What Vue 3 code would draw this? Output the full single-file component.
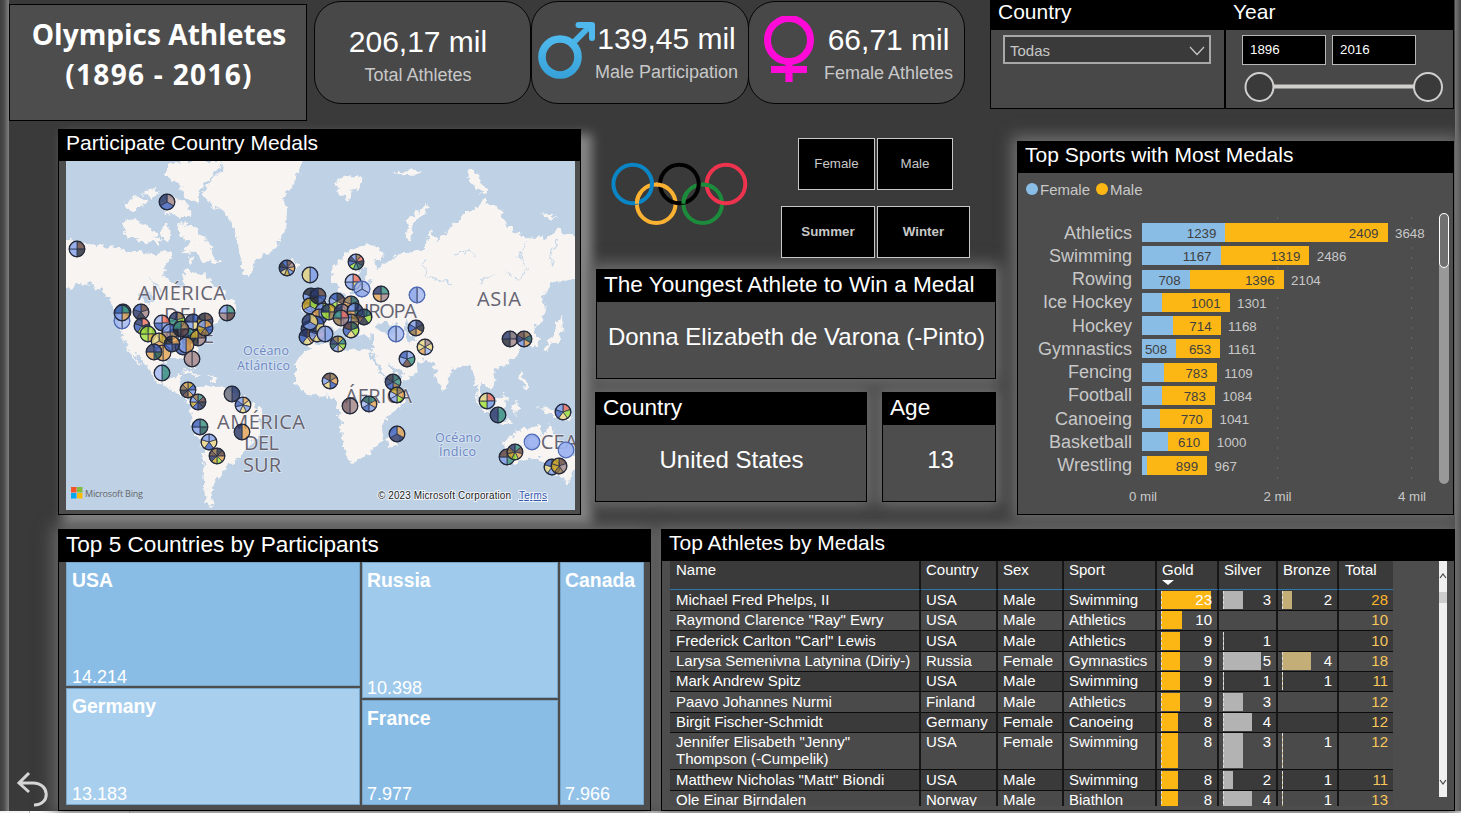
<script setup>
const N = '#1d2b5e', B = '#2f55b8', L = '#7d9be8', P = '#9db4f2', K = '#1b1f2b', W = '#5c3a30', R = '#a08080'
const O = '#e2a04a', Y = '#e8d47a', G = '#2d8a78', D = '#14524f', E = '#9ade2a', T = '#8a6a3a', S = '#f06a55', U = '#c9a21f'

const pins = [
  [167, 202, [R, B, N]], [77, 249, [W, K, L, L]], [123, 312, [G, L, G]], [122, 321, [P, P]], [122, 313, [G, O, L, B]],
  [141, 312, [W, R, K, N, B]], [227, 313, [G, W, R, L]], [162, 323, [S, L, B, P]], [177, 320, [T, E, K, G, N]],
  [193, 322, [B, Y, L, N]], [205, 321, [W, N, R, U, K]], [142, 326, [S, K, E, B, N]], [148, 334, [E, U, E, E]],
  [170, 332, [B, T, R, L]], [188, 336, [G, D, R, B]], [198, 338, [W, R, K, U]], [205, 328, [O, B, T, U, L]],
  [159, 341, [U, O, Y]], [163, 353, [O, O]], [154, 352, [B, D, O, N]], [183, 347, [W, B, L]], [186, 345, [O, L]],
  [172, 344, [O, N, B, K]], [181, 329, [T, W, K, G]], [192, 359, [R, R]], [162, 373, [G, P]],
  [188, 390, [U, B, L, O, W, K, T, O]], [198, 402, [G, W, K, N, B, U, L, T]], [232, 394, [N, '#5d6070']],
  [243, 405, [O, Y, L, Y, P, B, L]], [200, 427, [G, D, L, B]], [209, 442, [L, Y, B, Y, L]], [242, 432, [O, N]],
  [217, 456, [K, W, O, E, U, N, W, T]], [287, 268, [W, R, O, L, U, Y, N, K, B]], [310, 275, [L, Y]],
  [356, 262, [T, S, K, D, G, E, B, N, L]], [353, 282, [S, Y, L, P]], [362, 289, [P, L, P]], [381, 294, [G, R, O, N]],
  [417, 295, [P, L]], [312, 304, [E, N, L, T]], [311, 296, [N, B, U, L, K]], [318, 305, [O, B, Y, L]], [310, 306, [E, L, U]],
  [318, 296, [W, B, K, N]], [337, 301, [K, W, Y, E, L, B]], [351, 304, [D, G, B, O, T]], [323, 311, [E, U, N, L]],
  [319, 317, [L, B, Y, O]], [329, 312, [U, T, E, N]], [342, 312, [R, B, L, N]], [355, 311, [N, G, O, L]],
  [364, 317, [D, E, K, W, N]], [351, 322, [T, O, B, L]], [309, 329, [W, U, O, N, B]], [307, 337, [W, O, Y, B, N]],
  [317, 334, [U, S, Y, L, B]], [316, 324, [B, Y, N, T]], [325, 334, [L, P]], [341, 318, [S, R, T, G]], [310, 322, [Y, L, N]],
  [351, 330, [D, E, Y, B, W]], [338, 344, [U, G, E, Y, L, D, N, T]], [396, 334, [P, P]], [416, 328, [N, K, O, T, B, L]],
  [425, 347, [R, Y, P, O, Y, Y]], [407, 359, [L, G, W, L, B]], [330, 381, [T, O, B, Y, L, W]],
  [393, 382, [D, G, T, B, N, K]], [397, 395, [T, O, E, L, P, U]], [350, 406, [R, '#6d5058']], [369, 404, [G, O, L, B, P, D]],
  [397, 434, [O, N, B]], [510, 339, ['#6d6068', R, K, N]], [524, 339, [T, D, O, L, N, W]], [487, 401, [S, L, E, Y]],
  [498, 415, [G, N]], [563, 412, [S, E, Y, B, L]], [507, 457, [T, G, L, W]], [515, 452, [G, W, O, E, U, T, N]],
  [532, 442, [P]], [566, 450, [P]], [552, 467, [T, U, L, Y, B]], [559, 466, [W, R, T, U, U]]
]
const slices = pins.map(([x, y, colors]) => {
  const n = colors.length
  const r = 7.8
  const pt = (k) => {
    const a = (k / n) * Math.PI * 2 - Math.PI / 2
    return `${(x + r * Math.cos(a)).toFixed(2)} ${(y + r * Math.sin(a)).toFixed(2)}`
  }
  return {
    x, y, r, n, colors,
    paths: n > 1 ? colors.map((c, k) => ({ c, d: `M${x} ${y}L${pt(k)}A${r} ${r} 0 0 1 ${pt(k + 1)}Z` })) : []
  }
})

const sports = [
  ['Athletics', 1239, 2409], ['Swimming', 1167, 1319], ['Rowing', 708, 1396], ['Ice Hockey', 300, 1001],
  ['Hockey', 454, 714], ['Gymnastics', 508, 653], ['Fencing', 326, 783], ['Football', 301, 783],
  ['Canoeing', 271, 770], ['Basketball', 390, 610], ['Wrestling', 68, 899]
]
const barWidth = (v) => ({ width: v * 0.0673 + 'px' })

const athletes = [
  ['Michael Fred Phelps, II', 'USA', 'Male', 'Swimming', 23, 3, 2, 28],
  ['Raymond Clarence "Ray" Ewry', 'USA', 'Male', 'Athletics', 10, 0, 0, 10],
  ['Frederick Carlton "Carl" Lewis', 'USA', 'Male', 'Athletics', 9, 1, 0, 10],
  ['Larysa Semenivna Latynina (Diriy-)', 'Russia', 'Female', 'Gymnastics', 9, 5, 4, 18],
  ['Mark Andrew Spitz', 'USA', 'Male', 'Swimming', 9, 1, 1, 11],
  ['Paavo Johannes Nurmi', 'Finland', 'Male', 'Athletics', 9, 3, 0, 12],
  ['Birgit Fischer-Schmidt', 'Germany', 'Female', 'Canoeing', 8, 4, 0, 12],
  ['Jennifer Elisabeth "Jenny" Thompson (-Cumpelik)', 'USA', 'Female', 'Swimming', 8, 3, 1, 12],
  ['Matthew Nicholas "Matt" Biondi', 'USA', 'Male', 'Swimming', 8, 2, 1, 11],
  ['Ole Einar Bjrndalen', 'Norway', 'Male', 'Biathlon', 8, 4, 1, 13]
]
const goldBar = (v) => ({ width: (v === 23 ? 49 : v * 2 - 0.5) + 'px' })
const smallBar = (v) => ({ width: Math.max(0, (v - 1) * 9.3) + 'px' })
</script>

<template>
  <div class="page">
    <div class="canvas">
      <div class="edge left-edge"></div>
      <div class="report">
        <header class="top">
          <h1 class="title">Olympics Athletes<br /><span>(1896 - 2016)</span></h1>
          <div class="kpis">
            <div class="kpi first"><div class="kpi-text"><b>206,17 mil</b><span>Total Athletes</span></div></div>
            <div class="kpi male">
              <svg width="58" height="60" viewBox="537 19 58 60">
                <defs><linearGradient id="mg" x1="0" y1="0" x2="0" y2="1"><stop offset="0" stop-color="#4fb8ec" /><stop offset="1" stop-color="#38a3da" /></linearGradient></defs>
                <circle cx="560" cy="56" r="18" fill="none" stroke="url(#mg)" stroke-width="7.6" />
                <path d="M574 41L590 25" stroke="#4ab4e8" stroke-width="6" />
                <path d="M578.5 24H592V37" fill="none" stroke="#4fb8ec" stroke-width="6" stroke-linecap="round" stroke-linejoin="round" />
              </svg>
              <div class="kpi-text"><b>139,45 mil</b><span>Male Participation</span></div>
            </div>
            <div class="kpi female">
              <svg width="50" height="66" viewBox="764 15 50 66">
                <circle cx="789" cy="39" r="21.5" fill="none" stroke="#ff0ad6" stroke-width="7" />
                <path d="M789 60V81M771 68.5H807" stroke="#ff0ad6" stroke-width="7.2" />
              </svg>
              <div class="kpi-text"><b>66,71 mil</b><span>Female Athletes</span></div>
            </div>
          </div>
          <div class="slicer country-slicer">
            <h2>Country</h2>
            <div class="dropdown"><span>Todas</span><svg width="16" height="10" viewBox="0 0 16 10"><path d="M1 1L8 8.5L15 1" fill="none" stroke="#c8c8c8" stroke-width="1.2" /></svg></div>
          </div>
          <div class="slicer year-slicer">
            <h2>Year</h2>
            <div class="years"><span>1896</span><span>2016</span></div>
            <svg class="range" width="200" height="32" viewBox="0 0 200 32">
              <path d="M30 15.5H171" stroke="#d0cfce" stroke-width="4" />
              <circle cx="15.5" cy="16" r="14" fill="#3a3a3a" stroke="#d0cfce" stroke-width="2" />
              <circle cx="184" cy="16" r="14" fill="#3a3a3a" stroke="#d0cfce" stroke-width="2" />
            </svg>
          </div>
        </header>

        <section class="middle">
          <div class="panel map-panel">
            <h2>Participate Country Medals</h2>
            <svg class="map" width="509" height="349" viewBox="66 161 509 349">
              <defs>
                <filter id="coast" x="-5%" y="-5%" width="110%" height="110%">
                  <feTurbulence type="fractalNoise" baseFrequency="0.16" numOctaves="3" seed="4" />
                  <feDisplacementMap in="SourceGraphic" scale="10" xChannelSelector="R" yChannelSelector="G" />
                </filter>
              </defs>
              <rect x="66" y="161" width="509" height="349" fill="#bed1e5" />
              <g filter="url(#coast)" fill="#f7f4f2">
                <path d="M60 238L80 243L96 245L108 249L120 246L130 254L143 251L157 256L166 251L172 258L165 266L163 275L172 281L180 289L185 284L183 274L189 268L197 275L205 274L212 282L224 291L232 301L236 310L224 316L214 323L206 334L200 345L196 353L197 366L192 368L188 359L176 358L164 361L161 372L166 380L173 379L177 374L183 376L178 384L184 388L188 397L196 402L192 405L181 396L168 388L154 380L148 368L137 355L133 351L141 367L137 363L127 347L120 332L119 315L111 302L100 289L84 282L72 287L60 290Z" />
                <path d="M203 192L211 180L222 171L224 155H304L300 168L295 183L283 197L287 213L285 230L280 243L267 253L253 263L250 277L243 275L240 263L238 243L232 223L223 210L213 207Z" />
                <path d="M121 222L135 219L147 227L157 235L151 243L139 241L127 236Z" />
                <path d="M124 203L135 197L147 201L141 209L128 210ZM142 192L156 187L160 194L148 198ZM160 201L174 197L190 206L192 217L178 217L166 212Z" />
                <path d="M167 166L181 161H225L211 177L199 190L197 204L184 197L179 184L167 177Z" />
                <path d="M177 224L190 225L205 237L212 250L219 263L205 262L195 252L182 251L192 242L180 237Z" />
                <path d="M160 227L171 225L172 239L163 241ZM153 236L161 240L158 246ZM188 256L195 259L190 264Z" />
                <path d="M191 388L204 385L224 387L235 394L249 401L263 413L257 438L241 455L229 465L218 478L211 492L214 507L206 503L203 482L205 458L199 438L191 417L193 402Z" />
                <path d="M180 370L191 371L203 377L196 377ZM207 377L216 378L212 382ZM283 264L292 260L299 264L292 271L285 270Z" />
                <path d="M307 345L307 332L318 330L313 319L326 309L337 299L345 296L339 286L331 283L332 270L341 258L353 248L369 244L382 252L383 260L374 260L377 268L389 262L397 253L410 253L426 249L431 228L437 240L451 225L464 214L484 199L501 209L503 223L523 237L543 238L557 230L590 241V270L574 278L553 283L542 297L545 309L541 322L532 331L541 341L535 348L526 334L520 338L520 351L509 363L493 370L495 383L491 391L482 382L478 388L485 402L478 397L475 381L470 366L461 364L448 377L445 392L438 383L434 364L426 361L416 363L418 371L408 379L393 388L386 376L374 354L364 350L344 350L331 344L314 347Z" />
                <path d="M313 347L331 342L346 351L367 348L375 364L389 386L396 393L411 390L400 407L384 421L383 439L370 453L360 461L350 462L341 438L342 424L336 404L330 396L307 395L296 383L296 365L303 353Z" />
                <path d="M388 434L401 427L397 443L389 449ZM310 307L311 294L322 302L324 315L311 318ZM303 304L309 304L307 313L302 312Z" />
                <path d="M336 181L350 176L363 178L358 190L352 188L349 201L340 195ZM405 237L409 218L427 204L430 207L415 222L409 240ZM470 169L475 170L487 193L481 194L468 179ZM392 172L410 169L424 171L412 176ZM539 212L557 216L550 220Z" />
                <path d="M543 347L552 338L557 322L562 316L563 332L555 343L545 351Z" />
                <path d="M475 395L486 404L493 415L485 412ZM494 400L507 394L506 408L497 412ZM511 405L519 400L516 416ZM518 369L525 378L529 391L523 386ZM537 407L554 409L573 419L562 421L550 415ZM493 418L512 421L510 424L493 421Z" />
                <path d="M504 442L516 433L524 427L539 425L543 436L550 424L559 440L572 451L578 463L567 483L553 473L540 458L524 459L507 466Z" />
              </g>
              <g filter="url(#coast)" fill="#bed1e5">
                <path d="M316 340L330 328L342 330L349 339L357 333L366 338L374 337L374 350L344 349L331 341L317 345Z" />
                <path d="M376 325L388 321L399 329L388 333L377 331ZM405 320L412 323L410 333L415 340L409 342L405 331ZM350 294L355 280L363 267L367 270L362 281L373 280L365 286L358 294Z" />
                <path d="M386 363L398 370L405 374L401 379L393 372ZM139 294L147 290L155 300L149 305Z" />
              </g>
              <path filter="url(#coast)" d="M424 260L428 277L439 280L451 283M527 240L519 256L528 269L518 280L504 270M455 255L468 250L476 258M557 240L550 256L552 267M480 282L494 275M150 277L160 290" fill="none" stroke="#c6d7e8" stroke-width="1.2" />
              <g class="region">
                <text x="138" y="300" textLength="88">AMÉRICA</text><text x="164" y="322" textLength="38">DEL</text>
                <text x="150" y="343" textLength="64">NORTE</text><text x="477" y="306" textLength="44">ASIA</text>
                <text x="345" y="318" textLength="72">EUROPA</text><text x="345" y="403" textLength="67">ÁFRICA</text>
                <text x="217" y="429" textLength="88">AMÉRICA</text><text x="244" y="450" textLength="35">DEL</text><text x="243" y="472" textLength="38">SUR</text>
                <text x="525" y="449" textLength="86" lengthAdjust="spacingAndGlyphs">OCEANÍA</text>
              </g>
              <g class="ocean">
                <text x="243" y="355" textLength="46">Océano</text><text x="237" y="370" textLength="53">Atlántico</text>
                <text x="435" y="442" textLength="46">Océano</text><text x="439" y="456" textLength="37">Índico</text>
              </g>
              <g opacity=".93">
                <template v-for="(p, i) in slices" :key="i">
                  <path v-for="(s, k) in p.paths" :key="k" :d="s.d" :fill="s.c" fill-opacity=".82" stroke="#1b2440" stroke-opacity=".8" stroke-width=".9" />
                  <circle :cx="p.x" :cy="p.y" :r="p.r" :fill="p.n > 1 ? 'none' : p.colors[0]" :stroke="p.colors[0] === '#9db4f2' ? '#4563b5' : '#161b2c'" stroke-width="1.2" />
                </template>
              </g>
              <path fill="#f35325" d="M71 487h5.5v5.5H71z" /><path fill="#81bc3c" d="M77 487h5.5v5.5H77z" />
              <path fill="#05a6f0" d="M71 493h5.5v5.5H71z" /><path fill="#ffba08" d="M77 493h5.5v5.5H77z" />
              <text class="bing" x="85" y="497" textLength="58">Microsoft Bing</text>
              <text class="copy" x="378" y="499" textLength="133">© 2023 Microsoft Corporation</text>
              <text class="copy terms" x="519" y="499" textLength="28">Terms</text>
            </svg>
          </div>

          <div class="center">
            <div class="controls">
              <svg class="rings" width="138" height="64" viewBox="611 162 138 64" fill="none" stroke-width="4">
                <circle cx="656.2" cy="203.7" r="19.3" stroke="#fbb132" />
                <circle cx="702.7" cy="203.7" r="19.3" stroke="#1c8b3c" />
                <circle cx="632.7" cy="184" r="19.3" stroke="#0a86c6" />
                <circle cx="679.4" cy="184" r="19.3" stroke="#000" />
                <circle cx="726" cy="184" r="19.3" stroke="#ee334e" />
                <path d="M636.9 203.7A19.3 19.3 0 0 1 641 192M656.2 184.4A19.3 19.3 0 0 1 668 188.5" stroke="#fbb132" />
                <path d="M683.4 203.7A19.3 19.3 0 0 1 687 192.5M702.7 184.4A19.3 19.3 0 0 1 714 188" stroke="#1c8b3c" />
              </svg>
              <div class="buttons">
                <div class="button-row"><button class="b1">Female</button><button class="b2">Male</button></div>
                <div class="button-row strong"><button class="b3">Summer</button><button class="b4">Winter</button></div>
              </div>
            </div>
            <div class="panel youngest"><h2>The Youngest Athlete to Win a Medal</h2><p>Donna Elizabeth de Varona (-Pinto)</p></div>
            <div class="facts">
              <div class="panel fact-country"><h2>Country</h2><p>United States</p></div>
              <div class="panel fact-age"><h2>Age</h2><p>13</p></div>
            </div>
          </div>

          <div class="panel sports">
            <h2>Top Sports with Most Medals</h2>
            <div class="legend"><i class="f"></i>Female<i class="m"></i>Male</div>
            <div class="chart">
              <div class="plot">
                <div class="sport" v-for="s in sports" :key="s[0]">
                  <span class="name">{{ s[0] }}</span>
                  <span class="bar f" :style="barWidth(s[1])">{{ s[1] > 500 ? s[1] : '' }}</span>
                  <span class="bar m" :style="barWidth(s[2])">{{ s[2] }}</span>
                  <span class="sum">{{ s[1] + s[2] }}</span>
                </div>
                <div class="axis"><span>0 mil</span><span>2 mil</span><span>4 mil</span></div>
              </div>
              <div class="track"><div class="thumb"></div></div>
            </div>
          </div>
        </section>

        <section class="bottom">
          <svg class="back" width="33" height="38" viewBox="0 0 33 38"><path d="M13 2L3 12L13 21M3 12H17C34 12 35 34 18 34" fill="none" stroke="#d6d6d6" stroke-width="3" /></svg>
          <div class="panel tree">
            <h2>Top 5 Countries by Participants</h2>
            <div class="treemap">
              <div class="col c1"><div class="cell usa"><b>USA</b><span>14.214</span></div><div class="cell ger"><b>Germany</b><span>13.183</span></div></div>
              <div class="col c2"><div class="cell rus"><b>Russia</b><span>10.398</span></div><div class="cell fra"><b>France</b><span>7.977</span></div></div>
              <div class="col c3"><div class="cell can"><b>Canada</b><span>7.966</span></div></div>
            </div>
          </div>
          <div class="panel athletes">
            <h2>Top Athletes by Medals</h2>
            <div class="table-wrap">
              <div class="table">
                <div class="row head">
                  <span>Name</span><span>Country</span><span>Sex</span><span>Sport</span><span>Gold<i class="sort"></i></span><span>Silver</span><span>Bronze</span><span>Total</span>
                </div>
                <div class="row" v-for="(a, i) in athletes" :key="i" :class="{ alt: i % 2, tall: i === 7 }">
                  <span>{{ a[0] }}</span><span>{{ a[1] }}</span><span>{{ a[2] }}</span><span>{{ a[3] }}</span>
                  <span class="num gold"><i :style="goldBar(a[4])"></i><em>{{ a[4] }}</em></span>
                  <span class="num silver"><i v-if="a[5]" :style="smallBar(a[5])"></i><em>{{ a[5] || '' }}</em></span>
                  <span class="num bronze"><i v-if="a[6]" :style="smallBar(a[6])"></i><em>{{ a[6] || '' }}</em></span>
                  <span class="num total" :class="{ best: i === 0 }"><em>{{ a[7] }}</em></span>
                </div>
              </div>
              <div class="scroll">
                <svg width="8" height="6" viewBox="0 0 8 6"><path d="M1 5L4 1L7 5" fill="none" stroke="#444" stroke-width="1.2" /></svg>
                <div class="grip"></div>
                <svg class="down" width="8" height="6" viewBox="0 0 8 6"><path d="M1 1L4 5L7 1" fill="none" stroke="#444" stroke-width="1.2" /></svg>
              </div>
            </div>
          </div>
        </section>
      </div>
      <div class="edge right-edge"></div>
    </div>
    <footer class="tabs"><span></span></footer>
  </div>
</template>

<style>
body { margin: 0; overflow: hidden; background: #3a3a3a; }
</style>

<style scoped>
* { box-sizing: border-box; }
.page { width: 1461px; height: 813px; overflow: hidden; display: flex; flex-direction: column; font-family: "Liberation Sans", Arial, sans-serif; color: #fff; }
.canvas { display: flex; height: 811px; background: #3a3a3a; }
.edge { flex: none; }
.left-edge { width: 9px; background: linear-gradient(90deg, #404040, #4a4a4a 40%, #808080); }
.right-edge { width: 6px; background: linear-gradient(90deg, #777, #484848); }
.report { width: 1446px; height: 811px; display: flex; flex-direction: column; position: relative; isolation: isolate; }
h1, h2, p { margin: 0; font-weight: 400; }
.top { display: flex; align-items: flex-start; height: 129px; flex: none; }
.title { width: 298px; height: 117px; margin-top: 4px; padding: 9px 0 0 2px; border: 1px solid #000; background: #4d4d4d; font: 700 28.1px/40px "Open Sans", "Noto Sans", sans-serif; text-align: center; white-space: nowrap; }
.title span { letter-spacing: 1.25px; }
.kpis { display: flex; margin: 1px 0 0 7px; }
.kpi { height: 103px; border: 1px solid #050505; border-radius: 27px; background: #484848; display: flex; align-items: flex-start; }
.kpi.first { width: 217px; justify-content: center; padding: 21px 9px 0 0; }
.kpi.male { width: 218px; padding: 18px 0 0 5px; }
.kpi.female { width: 217px; padding: 14px 0 0 15px; margin-left: -1px; }
.kpi-text { display: flex; flex-direction: column; align-items: center; white-space: nowrap; }
.kpi-text b { font: 400 30px/38px "Liberation Sans"; }
.kpi-text span { font-size: 18px; line-height: 20px; margin-top: 4px; color: #c8c8c8; }
.male svg, .female svg { flex: none; }
.female .kpi-text { margin: 5px 0 0 10px; }
.slicer { height: 109px; border: 1px solid #000; border-top: 0; background: #484848; }
.slicer h2 { height: 30px; background: #000; font-size: 21px; line-height: 24px; padding-left: 7px; }
.country-slicer { width: 235px; margin-left: 25px; }
.year-slicer { width: 229px; }
.dropdown { width: 208px; height: 29px; margin: 5px 0 0 12px; padding: 2px 4px 0 5px; border: 2px solid #a8a8a8; background: #3a3a3a; color: #c8c8c8; font-size: 15px; display: flex; align-items: center; justify-content: space-between; }
.years { display: flex; gap: 6px; margin: 5px 0 0 16px; }
.years span { width: 84px; height: 30px; border: 1px solid #b8b8b8; background: #000; font-size: 13.33px; line-height: 27px; padding-left: 7px; }
.range { display: block; margin: 6px 0 0 18px; }
.panel { position: relative; border: 1px solid #000; background: #4d4d4d; display: flex; flex-direction: column; flex: none; }
.panel::before { content: ""; position: absolute; inset: 0; z-index: -1; box-shadow: 0 0 14px 6px #6e6e6e; }
.panel h2 { flex: none; background: #000; font-size: 21px; white-space: nowrap; padding-left: 7px; }
.middle { display: flex; align-items: flex-start; height: 400px; padding-left: 49px; flex: none; }
.map-panel { width: 523px; height: 386px; }
.map-panel::before { box-shadow: 8px 8px 10px 4px #858585; }
.map-panel h2 { height: 31px; line-height: 25px; }
.map { display: block; margin-left: 7px; }
.region text { font: 20px "Open Sans", "Noto Sans", sans-serif; fill: #666472; paint-order: stroke; stroke: #f7f4f2; stroke-width: 1.5px; stroke-opacity: .6; }
.ocean text { font: 12.5px "Open Sans", "Noto Sans", sans-serif; fill: #6b87c4; paint-order: stroke; stroke: #d5e1ee; stroke-width: 2px; }
.bing { font: 9px "Open Sans", sans-serif; fill: #666; }
.copy { font: 10px "Liberation Sans"; fill: #222; paint-order: stroke; stroke: #eef3f8; stroke-width: 2px; }
.copy.terms { fill: #3557b0; text-decoration: underline; }
.center { width: 401px; margin-left: 14px; display: flex; flex-direction: column; }
.controls { height: 140px; display: flex; align-items: flex-start; }
.rings { margin: 33px 0 0 16px; flex: none; }
.buttons { width: 189px; margin: 9px 0 0 32px; display: flex; flex-direction: column; align-items: center; gap: 16px; }
.button-row { display: flex; gap: 2px; }
button { padding: 0 0 2px; height: 52px; border: 1px solid #c8c8c8; border-radius: 0; background: #000; color: #c8c8c8; font: 13.33px "Liberation Sans"; }
.strong button { font-weight: 700; }
.b1 { width: 77px; } .b2 { width: 76px; } .b3 { width: 94px; } .b4 { width: 93px; }
.youngest { margin-left: 1px; height: 110px; width: 400px; }
.center .panel h2 { height: 32px; font-size: 22.6px; line-height: 29px; }
.center .panel p { flex: 1; font-size: 24px; line-height: 69px; padding-left: 1px; text-align: center; white-space: nowrap; }
.center .fact-age p { padding-left: 3px; }
.facts { display: flex; justify-content: space-between; margin-top: 13px; }
.facts .panel { height: 110px; }
.fact-country { width: 272px; } .fact-age { width: 114px; }
.sports { width: 437px; height: 374px; margin: 12px 0 0 21px; }
.sports h2 { height: 31px; line-height: 26px; }
.legend { display: flex; align-items: center; height: 32px; padding-left: 8px; font-size: 15px; color: #c8c8c8; }
.legend i { width: 12px; height: 12px; border-radius: 50%; margin-right: 2px; }
.legend i.f { background: #8abde6; }
.legend i.m { background: #fdb714; margin-left: 6px; }
.chart { display: flex; padding-top: 8px; }
.plot { width: 421px; padding-top: 8px; background-image: radial-gradient(circle, #666 0.7px, transparent 1px), radial-gradient(circle, #666 0.7px, transparent 1px); background-size: 3px 10px; background-repeat: repeat-y; background-position: 258px 0, 392px 0; height: 295px; }
.sport { display: flex; align-items: center; height: 23.25px; }
.name { width: 114px; margin-right: 10px; text-align: right; font-size: 18px; line-height: 20px; color: #c8c8c8; white-space: nowrap; }
.bar { height: 19px; padding: 2px 9px 0 0; display: flex; align-items: center; justify-content: flex-end; color: #404040; font-size: 13.33px; white-space: nowrap; }
.bar.f { background: #8abde6; }
.bar:empty { padding: 0; }
.bar.m { background: #fdb714; }
.sum { margin-left: 7.5px; padding-top: 2px; font-size: 13.33px; color: #c8c8c8; }
.axis { display: flex; margin: 7px 0 0 94px; background: #4d4d4d; }
.axis span { width: 62px; margin-right: 72.5px; flex: none; text-align: center; font-size: 13.33px; line-height: 25px; color: #c8c8c8; }
.axis span:last-child { margin-right: 0; }
.track { width: 10px; height: 271px; border-radius: 5px; background: #999; }
.thumb { width: 10px; height: 55px; border: 1px solid #fff; border-radius: 5px; background: #707070; }
.bottom { display: flex; align-items: flex-start; flex: 1; }
.back { margin: 242px 9px 0 7px; flex: none; }
.tree { width: 593px; height: 282px; }
.tree::before { box-shadow: 0 0 16px 5px #6c6c6c; }
.tree h2 { height: 32px; font-size: 22.6px; line-height: 29px; }
.treemap { display: flex; gap: 2px; margin-left: 7px; height: 243px; width: 578px; }
.col { display: flex; flex-direction: column; gap: 2px; }
.c1 { width: 294px; } .c2 { width: 196px; } .c3 { width: 84px; }
.cell { border: 1px solid #79a5c9; padding: 5px 0 0 5px; display: flex; flex-direction: column; justify-content: space-between; }
.cell b { font-size: 19.4px; line-height: 24px; }
.cell span { font-size: 18px; line-height: 20px; }
.c2 .cell, .c3 .cell { padding-left: 4px; }
.usa { height: 124px; background: #8abde6; }
.usa span { margin-bottom: -2px; }
.rus span { margin-bottom: -1px; }
.ger { flex: 1; background: #a9cfee; }
.rus { height: 136px; background: #a0caeb; }
.fra { flex: 1; background: #8abde6; }
.can { flex: 1; background: #93c2e8; }
.athletes { width: 794px; height: 282px; margin-left: 10px; }
.athletes::before { box-shadow: 0 0 14px 6px #686868; }
.athletes h2 { height: 31px; line-height: 26px; }
.table-wrap { display: flex; justify-content: space-between; height: 245px; padding: 0 7px 0 8px; overflow: hidden; }
.table { width: 723px; height: 245px; overflow: hidden; font-size: 15px; }
.row { display: grid; grid-template-columns: 251px 77px 66px 93px 62px 59px 61px 54px; height: 20.33px; background: #3a3a3a; }
.row.alt { background: #4a4a4a; }
.row > span { border-right: 2px solid #161616; border-bottom: 1px solid #0c0c0c; padding-left: 6px; line-height: 20px; min-width: 0; }
.row > span:nth-child(n + 2):nth-child(-n + 7) { padding-left: 5px; }
.row > span:last-child { border-right: 0; }
.row.tall { height: 37.33px; }
.row.tall > span { line-height: 17px; padding-top: 1px; }
.row.head { height: 29px; }
.row.head > span { border-bottom: 1px solid #2a77ad; line-height: 18px; white-space: nowrap; }
.sort { display: block; width: 0; margin-top: 1px; border: 6px solid transparent; border-top: 5px solid #fff; border-bottom: 0; }
.row .num { display: grid; padding: 0 5px 0 5px; }
.row > .num:nth-child(n + 5):nth-child(-n + 7) { padding-left: 4px; }
.row.tall > .num { padding-top: 0; }
.num i { grid-area: 1 / 1; box-sizing: content-box; border-left: 1px dashed #e0e0e0; justify-self: start; margin: 1px 0; }
.num em { grid-area: 1 / 1; justify-self: end; font-style: normal; }
.row.tall .num em { padding-top: 1px; }
.gold i { background: #fdb714; }
.silver i { background: #b3b3b3; }
.bronze i { background: #c4ae78; }
.total em { color: #f6c65b; }
.total.best em { color: #fdb52a; }
.scroll { width: 8px; height: 236px; background: #f0f0f0; display: flex; flex-direction: column; }
.scroll svg { margin-top: 12px; }
.grip { height: 11px; margin-top: 13px; background: #cdcdcd; }
.scroll .down { margin-top: auto; margin-bottom: 12px; }
.tabs { height: 2px; background: #f5f5f5; display: flex; padding-left: 29px; }
.tabs span { width: 101px; background: #fff; border: solid #bbb; border-width: 0 1px; }
</style>
